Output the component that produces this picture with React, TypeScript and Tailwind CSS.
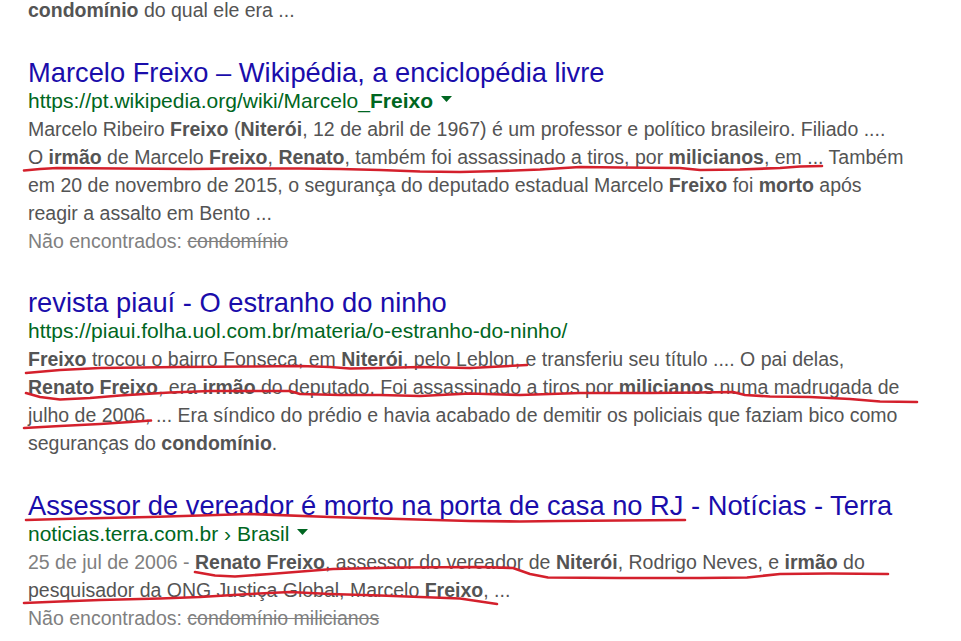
import React from "react";

const B = ({ children }: { children: React.ReactNode }) => (
  <b className="font-bold text-[#545454]">{children}</b>
);

const Tri = () => (
  <svg width="11" height="7" viewBox="0 0 11 7" className="ml-[8px] inline-block align-middle relative -top-[3px]">
    <path d="M0 0 L11 0 L5.5 6 Z" fill="#006621" />
  </svg>
);

const Line = ({ children }: { children: React.ReactNode }) => (
  <div className="whitespace-nowrap h-[28px] leading-[28px]">{children}</div>
);

const Title = ({ children }: { children: React.ReactNode }) => (
  <div className="whitespace-nowrap h-[28px] leading-[28px] text-[27.3px] text-[#1a0dab]">{children}</div>
);

const Url = ({ children }: { children: React.ReactNode }) => (
  <div className="whitespace-nowrap h-[28px] leading-[28px] text-[21px] text-[#006621]">{children}</div>
);

const Missing = ({ children }: { children: React.ReactNode }) => (
  <div className="whitespace-nowrap h-[28px] leading-[28px] text-[#808080]">
    Não encontrados: <s className="text-[#808080]">{children}</s>
  </div>
);

const red = "#d4202c";

export default function App() {
  return (
    <div
      className="relative w-[961px] h-[641px] overflow-hidden bg-white text-[19.5px] text-[#545454]"
      style={{ fontFamily: '"Liberation Sans", Arial, sans-serif' }}
    >
      <div className="pl-[28px] -mt-[4px] flex flex-col">
        <Line>
          <B>condomínio</B> do qual ele era ...
        </Line>

        <div className="mt-[35px]">
          <Title>Marcelo Freixo – Wikipédia, a enciclopédia livre</Title>
          <Url>
            https://pt.wikipedia.org/wiki/Marcelo_<b className="font-bold">Freixo</b>
            <Tri />
          </Url>
          <Line>
            Marcelo Ribeiro <B>Freixo</B> (<B>Niterói</B>, 12 de abril de 1967) é um professor e político brasileiro. Filiado ....
          </Line>
          <Line>
            O <B>irmão</B> de Marcelo <B>Freixo</B>, <B>Renato</B>, também foi assassinado a tiros, por <B>milicianos</B>, em ... Também
          </Line>
          <Line>
            em 20 de novembro de 2015, o segurança do deputado estadual Marcelo <B>Freixo</B> foi <B>morto</B> após
          </Line>
          <Line>reagir a assalto em Bento ...</Line>
          <Missing>condomínio</Missing>
        </div>

        <div className="mt-[34px]">
          <Title>revista piauí - O estranho do ninho</Title>
          <Url>https://piaui.folha.uol.com.br/materia/o-estranho-do-ninho/</Url>
          <Line>
            <B>Freixo</B> trocou o bairro Fonseca, em <B>Niterói</B>, pelo Leblon, e transferiu seu título .... O pai delas,
          </Line>
          <Line>
            <B>Renato Freixo</B>, era <B>irmão</B> do deputado. Foi assassinado a tiros por <B>milicianos</B> numa madrugada de
          </Line>
          <Line>julho de 2006, ... Era síndico do prédio e havia acabado de demitir os policiais que faziam bico como</Line>
          <Line>
            seguranças do <B>condomínio</B>.
          </Line>
        </div>

        <div className="mt-[35px]">
          <Title>Assessor de vereador é morto na porta de casa no RJ - Notícias - Terra</Title>
          <Url>
            noticias.terra.com.br › Brasil
            <Tri />
          </Url>
          <Line>
            <span className="text-[#808080]">25 de jul de 2006 - </span>
            <B>Renato Freixo</B>, assessor do vereador de <B>Niterói</B>, Rodrigo Neves, e <B>irmão</B> do
          </Line>
          <Line>
            pesquisador da ONG Justiça Global, Marcelo <B>Freixo</B>, ...
          </Line>
          <Missing>condomínio milicianos</Missing>
        </div>
      </div>

      <svg
        className="absolute left-0 top-0 pointer-events-none"
        width="961"
        height="641"
        viewBox="0 0 961 641"
        fill="none"
        stroke={red}
        strokeWidth="2.6"
        strokeLinecap="round"
        strokeLinejoin="round"
      >
        <polyline points="24,170.5 40,169 57,168 120,168.5 190,169 240,168.5 300,168.5 340,169 380,170 420,171.5 460,172 500,171 540,169.5 580,167 620,167.5 680,168 700,170 740,169.5 780,168 800,166.5 822,166" />
        <polyline points="26,373 60,370 100,368 180,367 250,366.5 300,366 330,367 350,368.5 380,368 420,367 470,368 500,366.5 527,365" />
        <polyline points="26,393 40,397 60,399.5 90,398 120,395.5 170,392.5 210,391 290,391 300,394 340,395 380,395 420,396 470,393.5 520,395 580,393 650,393 700,392.5 733,392 745,395 770,396.5 810,397 850,399 880,401.5 917,402" />
        <polyline points="24,428 60,426 100,424 130,422 151,420.5" />
        <polyline points="26,520 80,518.5 150,517 250,514 330,517 400,519 470,521 520,521.5 560,521 620,520.5 685,520" />
        <polyline points="195,572 215,575.5 235,576.5 270,574 333,569 400,567.5 480,567 513,568 530,574 548,577.5 620,578 700,578 747,577.5 780,574 830,573.5 888,574" />
        <polyline points="24,603 60,601.5 100,600 160,598.5 200,597 250,594 290,592 330,594 380,595.5 420,597 460,598.5 497,604" />
      </svg>
    </div>
  );
}
